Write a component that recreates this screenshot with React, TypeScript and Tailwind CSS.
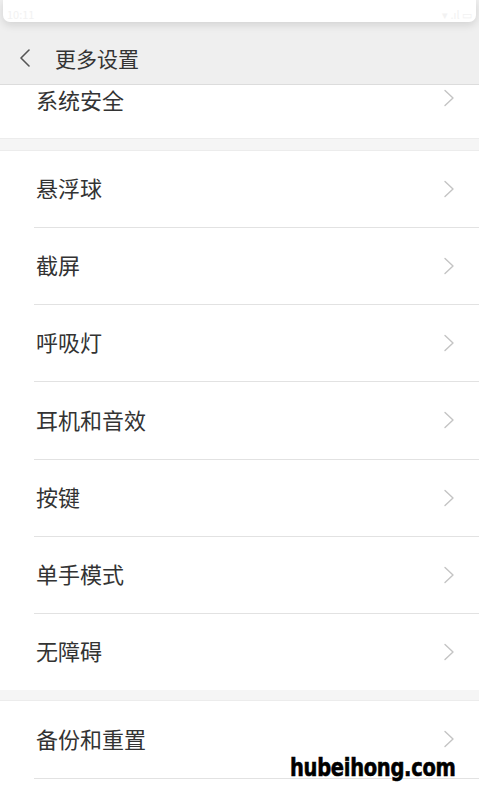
import React from "react";

const font = { fontFamily: '"Noto Sans CJK SC", "Noto Sans", sans-serif' };

function Chevron({ className }: { className?: string }) {
  return (
    <svg width="12" height="18" viewBox="0 0 12 18" className={className}>
      <path d="M2 1.5 L10 9 L2 16.5" fill="none" stroke="currentColor" strokeWidth="1.4" strokeLinecap="round" strokeLinejoin="round" />
    </svg>
  );
}

function Row({ label, h, divider = true }: { label: string; h: number; divider?: boolean }) {
  return (
    <div className="flex flex-col">
      <div className="flex items-center justify-between pl-[36px] pr-[24px]" style={{ height: h }}>
        <span className="text-[22px] text-[#333333] leading-none mb-[4px]">{label}</span>
        <Chevron className="text-[#c4c4c4] mb-[1px]" />
      </div>
      {divider && <div className="ml-[34px] h-px bg-[#e2e2e2]" />}
    </div>
  );
}

export default function App() {
  const items: [string, number][] = [
    ["悬浮球", 76],
    ["截屏", 76],
    ["呼吸灯", 76],
    ["耳机和音效", 77],
    ["按键", 76],
    ["单手模式", 76],
    ["无障碍", 76],
  ];
  return (
    <div className="w-[479px] h-[793px] overflow-hidden bg-white relative" style={font}>
      <div className="bg-[#efefef] h-[85px] flex flex-col border-b border-[#dcdcdc]">
        <div className="px-[3px]">
          <div className="h-[22px] bg-white rounded-b-[7px] shadow-[0_3px_8px_rgba(0,0,0,0.12)] flex items-end justify-between px-[4px] pb-[2px]">
            <span className="text-[11px] text-[#f2f2f2] leading-none">10:11</span>
            <span className="text-[11px] text-[#f2f2f2] leading-none">▾ .ıl ▭</span>
          </div>
        </div>
        <div className="flex-1 flex items-center pl-[18px] pt-[10px]">
          <svg width="14" height="18" viewBox="0 0 14 18" className="text-[#555555]">
            <path d="M11 1 L3 9 L11 17" fill="none" stroke="currentColor" strokeWidth="1.6" strokeLinecap="round" strokeLinejoin="round" />
          </svg>
          <span className="ml-[23px] text-[21px] text-[#333333] leading-none">更多设置</span>
        </div>
      </div>
      <div className="h-[53px] flex items-start justify-between pl-[36px] pr-[24px] pt-[3px]">
        <span className="text-[22px] text-[#333333] leading-none">系统安全</span>
        <Chevron className="text-[#c4c4c4] mt-[1px]" />
      </div>
      <div className="h-[13px] bg-[#f5f5f5] border-t border-b border-[#ececec]" />
      {items.map(([t, h], i) => (
        <Row key={t} label={t} h={h} divider={i < items.length - 1} />
      ))}
      <div className="h-[11px] bg-[#f5f5f5] border-b border-[#ececec]" />
      <Row label="备份和重置" h={77} />
      <div
        className="absolute left-[290px] top-[756px] text-[19.5px] font-bold text-black tracking-[-0.3px] leading-none scale-y-[1.25] origin-top-left [-webkit-text-stroke:0.5px_black]"
        style={{ fontFamily: '"DejaVu Sans", sans-serif' }}
      >
        hubeihong.com
      </div>
    </div>
  );
}
